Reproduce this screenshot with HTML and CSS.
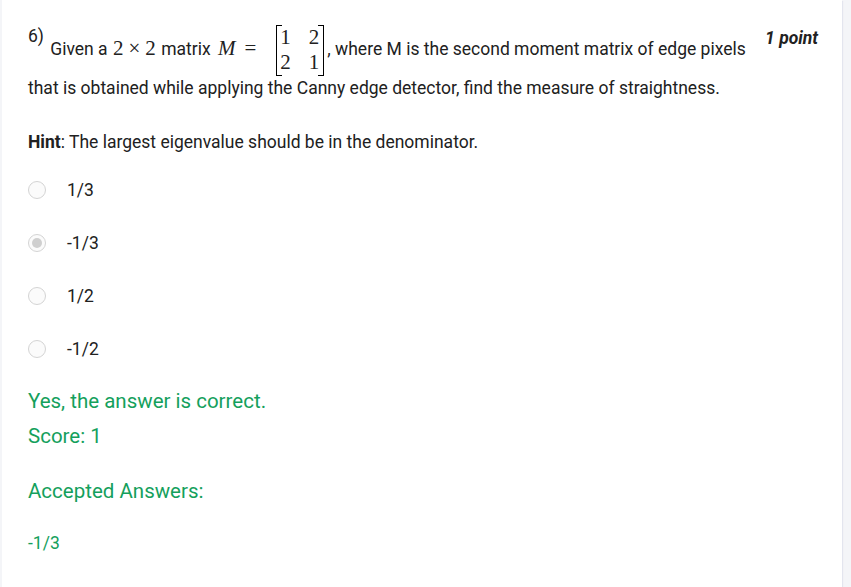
FILE: index.html
```html
<!DOCTYPE html>
<html lang="en">
<head>
<meta charset="utf-8">
<title>Question 6</title>
<link rel="stylesheet" href="styles.css">
</head>
<body>
<div class="card">
  <div class="qhead">
    <div class="qtext">
      <span class="qnum">6)</span> Given a <span class="math">2<span class="bin">×</span>2</span> matrix <span class="math"><span class="mi">M</span><span class="rel">=</span><span class="matrix"><span class="br br-l"></span><span class="cells"><span>1</span><span>2</span><span>2</span><span>1</span></span><span class="br br-r"></span></span></span>, where M is the second moment matrix of edge pixels that is obtained while applying the Canny edge detector, find the measure of straightness.
    </div>
    <div class="points">1 point</div>
  </div>
  <p class="hint"><b>Hint</b>: The largest eigenvalue should be in the denominator.</p>
  <div class="options">
    <div class="opt"><span class="radio"></span><span class="opt-label">1/3</span></div>
    <div class="opt"><span class="radio radio-on"></span><span class="opt-label">-1/3</span></div>
    <div class="opt"><span class="radio"></span><span class="opt-label">1/2</span></div>
    <div class="opt"><span class="radio"></span><span class="opt-label">-1/2</span></div>
  </div>
  <div class="feedback">
    <p class="fb-line">Yes, the answer is correct.</p>
    <p class="fb-line">Score: 1</p>
    <p class="fb-line fb-accepted">Accepted Answers:</p>
    <p class="fb-answer">-1/3</p>
  </div>
</div>
</body>
</html>
```
FILE: styles.css
```css
html, body {
  margin: 0;
  padding: 0;
}
body {
  background: #f4f5f8;
  font-family: Roboto, "Liberation Sans", sans-serif;
  font-size: 17.5px;
  color: #212121;
  height: 587px;
  overflow: hidden;
}
.card {
  margin-left: 2px;
  width: 840px;
  box-sizing: border-box;
  background: #fff;
  padding: 24px 24px 33px 26px;
  box-shadow: 1px 1px 1px #e3e5ee;
}
.qhead {
  display: flex;
  align-items: flex-start;
}
.qtext {
  flex: 1;
  line-height: 24px;
  padding-right: 8px;
}
.qnum {
  vertical-align: 13px;
  margin-right: 2px;
}
.points {
  font-weight: 700;
  font-style: italic;
  margin-top: 4px;
  white-space: nowrap;
}
.math {
  font-family: "Liberation Serif", "DejaVu Serif", serif;
  font-size: 21px;
  margin: 0 1px 0 1px;
}
.bin {
  margin: 0 5px;
}
.mi {
  font-style: italic;
  margin: 0 9px 0 2px;
}
.rel {
  margin-right: 20px;
}
.matrix {
  display: inline-flex;
  vertical-align: middle;
  align-items: stretch;
  margin-right: 2px;
}
.br {
  width: 5px;
  border: 1px solid #000;
}
.br-l {
  border-right: none;
}
.br-r {
  border-left: none;
}
.cells {
  display: grid;
  grid-template-columns: auto auto;
  column-gap: 18px;
  line-height: 25.5px;
  margin: 0 -1px 0 -2px;
}
.hint {
  margin: 30px 0 0;
  line-height: 24px;
}
.options {
  margin-top: 24px;
  display: flex;
  flex-direction: column;
  gap: 29px;
}
.opt {
  display: flex;
  align-items: center;
  height: 24px;
}
.radio {
  width: 16px;
  height: 16px;
  border: 1px solid #d4d4d4;
  border-radius: 50%;
  background: #fbfbfb;
  margin-right: 21px;
  flex: none;
  box-sizing: content-box;
  position: relative;
}
.radio-on::after {
  content: "";
  position: absolute;
  left: 3px;
  top: 3px;
  width: 10px;
  height: 10px;
  border-radius: 50%;
  background: #cfcfcf;
}
.opt-label {
  line-height: 24px;
}
.feedback {
  margin-top: 23px;
  color: #14a05c;
}
.fb-line {
  margin: 0;
  font-size: 20.5px;
  line-height: 35px;
}
.fb-accepted {
  margin-top: 20px;
}
.fb-answer {
  margin: 22px 0 0;
  line-height: 24px;
}
```
